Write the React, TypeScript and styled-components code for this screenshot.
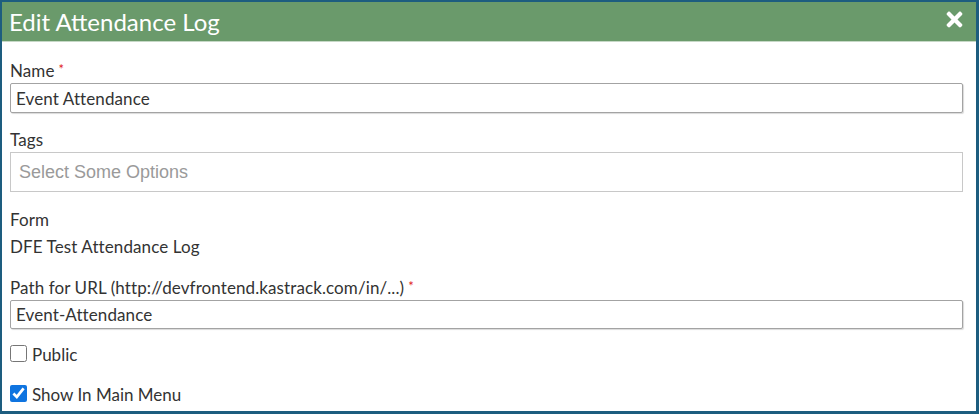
import { FaTimes } from 'react-icons/fa';
import styled, { createGlobalStyle } from 'styled-components';

const GlobalStyle = createGlobalStyle`
  html, body {
    margin: 0;
    padding: 0;
    background: #ffffff;
  }
  body {
    font-family: Lato, "Liberation Sans", sans-serif;
    color: #333333;
  }
`;

const Dialog = styled.div`
  box-sizing: border-box;
  width: 979px;
  height: 414px;
  border: 2px solid #1d5d7f;
  border-right-width: 3px;
  border-bottom-width: 3px;
  background: #ffffff;
  display: flex;
  flex-direction: column;
  overflow: hidden;
`;

const Header = styled.div`
  flex-shrink: 0;
  height: 39px;
  background: #6a9a6b;
  border-bottom: 1px solid #c6d8c6;
  display: flex;
  align-items: center;
  justify-content: space-between;
  padding: 0 10px 0 7px;
`;

const Title = styled.div`
  font-size: 24px;
  color: #ffffff;
  line-height: 1;
  padding-top: 1px;
`;

const CloseButton = styled.button`
  border: 0;
  background: none;
  padding: 0;
  color: #ffffff;
  display: flex;
  cursor: pointer;
  margin-top: -4px;
`;

const Body = styled.div`
  flex-shrink: 0;
  padding: 17px 13px 0 8px;
  display: flex;
  flex-direction: column;
  font-size: 17px;
  letter-spacing: 0.1px;
`;

const Label = styled.div<{ $top?: number }>`
  line-height: 20px;
  margin-top: ${(p) => p.$top ?? 0}px;
  margin-bottom: 2px;
`;

const Required = styled.span`
  color: #e0201a;
  font-size: 13px;
  margin-left: 4px;
  vertical-align: 3px;
`;

const TextInput = styled.input<{ $height: number }>`
  box-sizing: border-box;
  width: 100%;
  height: ${(p) => p.$height}px;
  margin: 0;
  border: 1px solid #a3a3a3;
  border-radius: 2px;
  box-shadow: 1px 1px 1px rgba(0, 0, 0, 0.15);
  padding: 0 5px;
  font-family: Lato, "Liberation Sans", sans-serif;
  font-size: 17px;
  letter-spacing: 0.1px;
  color: #333333;
  outline: none;
  background: #ffffff;
`;

const TagSelect = styled.div`
  box-sizing: border-box;
  width: 100%;
  height: 40px;
  border: 1px solid #c8c8c8;
  padding: 0 8px;
  display: flex;
  align-items: center;
  font-family: "Liberation Sans", Arial, sans-serif;
  font-size: 18px;
  letter-spacing: 0;
  color: #9a9a9a;
`;

const Value = styled.div`
  line-height: 20px;
  margin-top: 5px;
`;

const CheckRow = styled.label<{ $top: number }>`
  display: flex;
  align-items: center;
  gap: 5px;
  line-height: 20px;
  margin-top: ${(p) => p.$top}px;
  letter-spacing: 0;
  cursor: pointer;
`;

const CheckBox = styled.input`
  width: 17px;
  height: 17px;
  margin: 0;
  accent-color: #0f74e0;
`;

const CheckText = styled.span`
  padding-top: 4px;
`;

export default function App() {
  return (
    <>
      <GlobalStyle />
      <Dialog>
        <Header>
          <Title>Edit Attendance Log</Title>
          <CloseButton aria-label="Close">
            <FaTimes size={23} />
          </CloseButton>
        </Header>
        <Body>
          <Label>
            Name<Required>*</Required>
          </Label>
          <TextInput $height={30} defaultValue="Event Attendance" />

          <Label $top={17}>Tags</Label>
          <TagSelect>Select Some Options</TagSelect>

          <Label $top={18}>Form</Label>
          <Value>DFE Test Attendance Log</Value>

          <Label $top={19}>
            Path for URL (http://devfrontend.kastrack.com/in/...)
            <Required>*</Required>
          </Label>
          <TextInput $height={29} defaultValue="Event-Attendance" />

          <CheckRow $top={12}>
            <CheckBox type="checkbox" />
            <CheckText>Public</CheckText>
          </CheckRow>
          <CheckRow $top={16}>
            <CheckBox type="checkbox" defaultChecked />
            <CheckText>Show In Main Menu</CheckText>
          </CheckRow>
        </Body>
      </Dialog>
    </>
  );
}
